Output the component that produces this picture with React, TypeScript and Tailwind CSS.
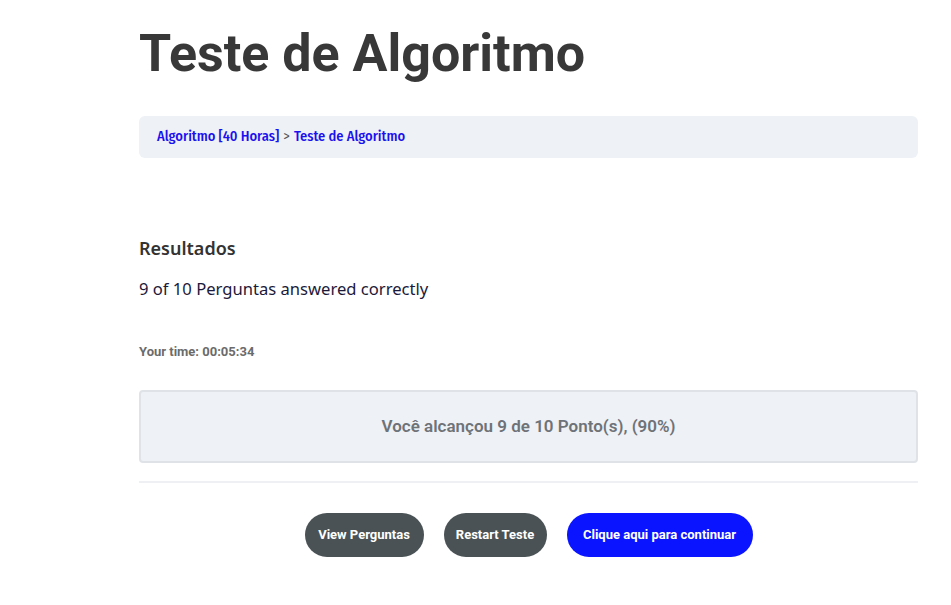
export default function App() {
  return (
    <div className="min-h-[605px] w-[951px] bg-white">
      <div className="ml-[139px] w-[779px] pt-[22px]">
        <h1 className="text-[52px] font-bold leading-[64px] text-[#383838]" style={{ fontFamily: 'Roboto, sans-serif' }}>
          Teste de Algoritmo
        </h1>
        <div
          className="mt-[30px] flex h-[42px] items-center rounded-[6px] bg-[#eef1f5] px-[18px] text-[14.4px] font-medium"
          style={{ fontFamily: '"Fira Sans Condensed", "Roboto Condensed", Roboto, sans-serif' }}
        >
          <span className="text-[#1b10f0]">Algoritmo [40 Horas]</span>
          <span className="mx-[4px] font-normal text-[#555]">&gt;</span>
          <span className="text-[#1b10f0]">Teste de Algoritmo</span>
        </div>
        <div style={{ fontFamily: '"Noto Sans", "Open Sans", sans-serif' }}>
          <h2 className="mt-[78px] text-[18px] font-semibold leading-[24px] text-[#333]">Resultados</h2>
          <p className="mt-[18px] text-[16.6px] leading-[22px] text-[#1c1a3a]">9 of 10 Perguntas answered correctly</p>
          <p className="mt-[44px] text-[13px] font-bold leading-[16px] text-[#6b6b6b]" style={{ fontFamily: 'Roboto, sans-serif' }}>
            Your time: 00:05:34
          </p>
        </div>
        <div
          className="mt-[30px] flex h-[73px] items-center justify-center rounded-[4px] border-2 border-[#dfe3e8] bg-[#eef1f5] text-[17px] font-semibold text-[#6e7378]"
          style={{ fontFamily: 'Roboto, sans-serif' }}
        >
          Você alcançou 9 de 10 Ponto(s), (90%)
        </div>
        <hr className="mt-[18px] border-t-2 border-[#eef0f3]" />
        <div
          className="mt-[30px] flex justify-center gap-[20px] text-[13px] font-bold text-white"
          style={{ fontFamily: 'Roboto, sans-serif' }}
        >
          <button className="h-[44px] w-[119px] rounded-full bg-[#4a5255]">View Perguntas</button>
          <button className="h-[44px] w-[103px] rounded-full bg-[#4a5255]">Restart Teste</button>
          <button className="h-[44px] w-[186px] rounded-full bg-[#0a14ff]">Clique aqui para continuar</button>
        </div>
      </div>
    </div>
  );
}
